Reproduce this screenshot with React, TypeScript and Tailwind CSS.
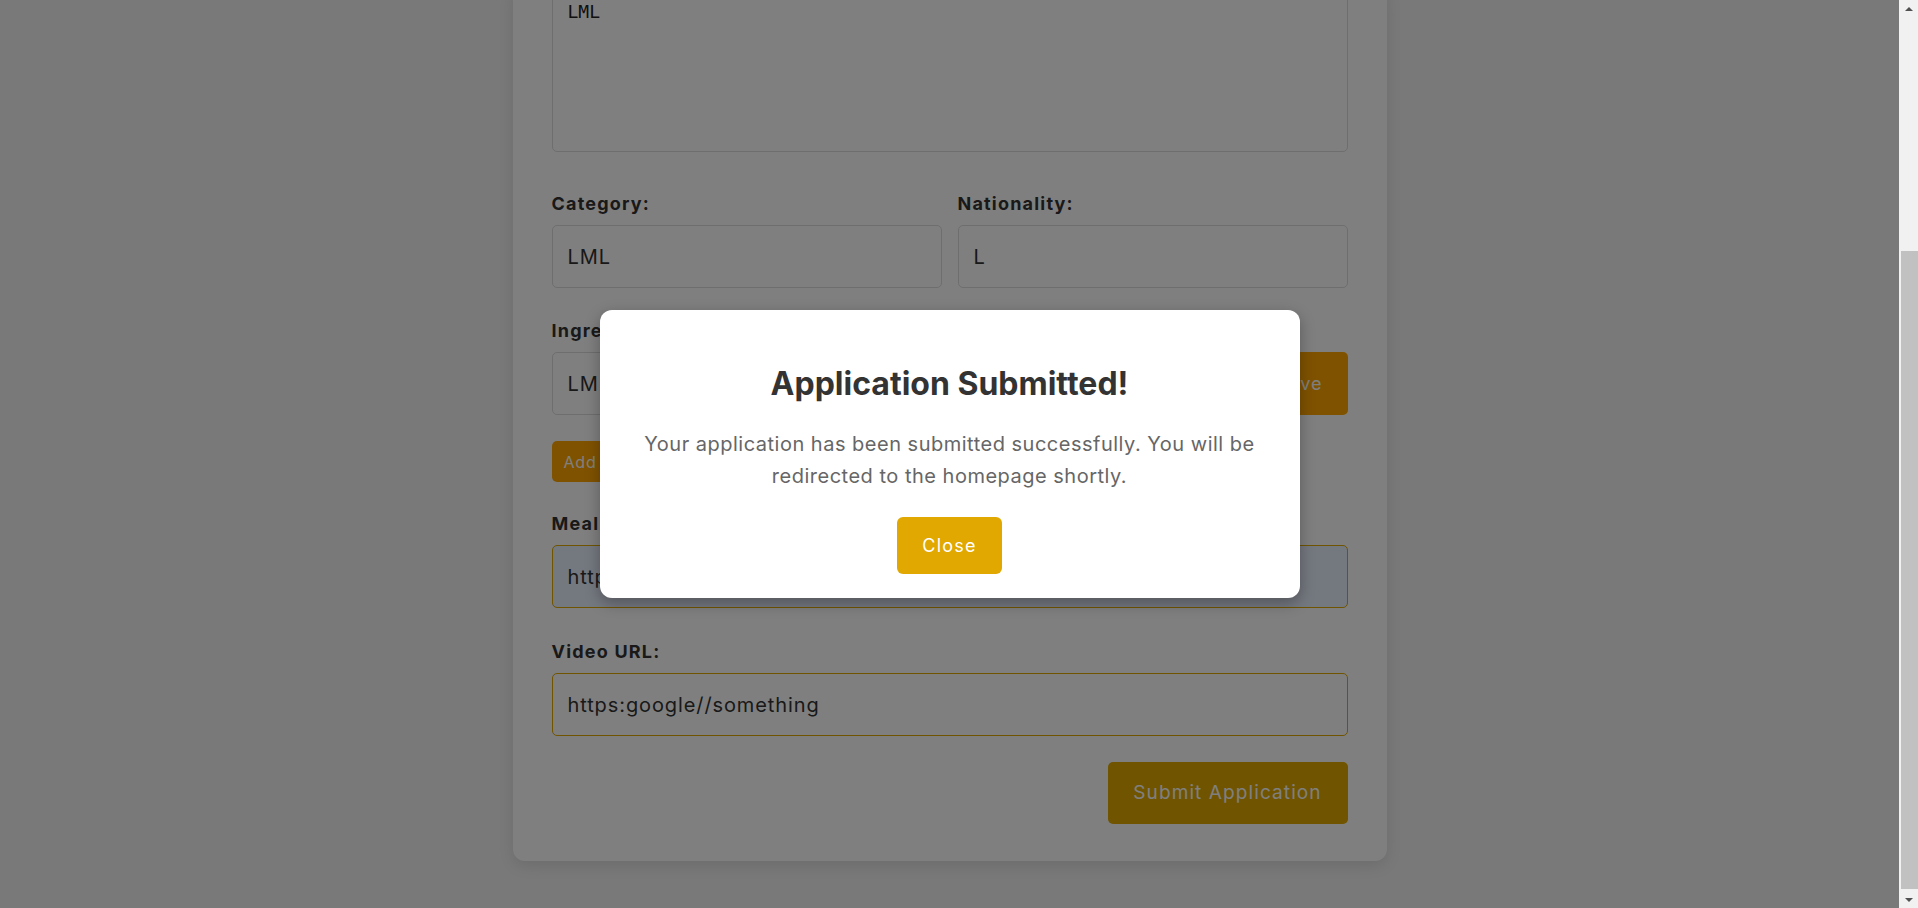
import type { ReactNode } from "react";

function Label({ children }: { children: ReactNode }) {
  return (
    <label className="block mb-[8px] text-[18px] leading-[27px] font-bold tracking-[1.2px] text-[#333]">
      {children}
    </label>
  );
}

const inputCls =
  "block w-full h-[63px] px-[15px] rounded-[5px] border border-[#ddd] bg-white text-[20px] tracking-[0.9px] text-[#333] outline-none";

function Scrollbar() {
  // classic browser scrollbar, page scrolled to the bottom
  return (
    <div className="flex h-full w-[19px] shrink-0 flex-col bg-[#f1f1f1]">
      <div className="flex h-[17px] items-center justify-center">
        <div className="h-0 w-0 border-x-[4px] border-b-[4px] border-x-transparent border-b-[#505050]" />
      </div>
      <div className="flex-1 pt-[234px] pl-[2px]">
        <div className="h-[638px] bg-[#c1c1c1]" />
      </div>
      <div className="flex h-[17px] items-center justify-center">
        <div className="h-0 w-0 border-x-[4px] border-t-[4px] border-x-transparent border-t-[#505050]" />
      </div>
    </div>
  );
}

export default function App() {
  return (
    <div className="flex h-screen overflow-hidden font-['Inter',sans-serif]">
      <main className="relative flex flex-1 flex-col justify-end overflow-hidden bg-[#f2f2f2]">
        <div className="shrink-0 pb-[47px]">
          <form className="mx-auto w-[874px] rounded-xl bg-white px-[39px] pb-[37px] shadow-[0_5px_15px_rgba(0,0,0,0.1)]">
            <textarea
              className="block w-full h-[167px] p-[15px] rounded-[5px] border border-[#ddd] bg-white font-['DejaVu_Sans_Mono',monospace] text-[18px] leading-[21px] text-[#222] outline-none resize-none"
              value="LML"
              readOnly
            />

            <div className="mt-[38px] grid grid-cols-2 gap-[16px]">
              <div>
                <Label>Category:</Label>
                <input className={inputCls} value="LML" readOnly />
              </div>
              <div>
                <Label>Nationality:</Label>
                <input className={inputCls} value="L" readOnly />
              </div>
            </div>

            <div className="mt-[29px]">
              <Label>Ingredients:</Label>
              <div className="flex gap-[10px]">
                <input className={inputCls} value="LM" readOnly />
                <button
                  type="button"
                  className="h-[63px] shrink-0 rounded-[5px] bg-[#ffa500] px-[25px] text-[18px] tracking-[1px] text-white"
                >
                  Remove
                </button>
              </div>
            </div>

            <button
              type="button"
              className="mt-[26px] block h-[41px] rounded-[5px] bg-[#ffa500] px-[12px] text-[16px] tracking-[0.8px] text-white"
            >
              Add Ingredient
            </button>

            <div className="mt-[28px]">
              <Label>Meal Image URL:</Label>
              <input
                className={inputCls + " !border-[#e0a800] !bg-[#e8f0fe]"}
                value="https://images.example.com/meal.jpg"
                readOnly
              />
            </div>

            <div className="mt-[30px]">
              <Label>Video URL:</Label>
              <input
                className={inputCls + " !border-[#e0a800]"}
                value="https:google//something"
                readOnly
              />
            </div>

            <div className="mt-[26px] flex justify-end">
              <button
                type="button"
                className="h-[62px] w-[240px] rounded-[5px] bg-[#e0a800] text-[19px] tracking-[1.1px] text-white"
              >
                Submit Application
              </button>
            </div>
          </form>
        </div>

        <div className="absolute inset-0 z-50 flex items-center justify-center bg-black/50">
          <div className="w-[700px] rounded-xl bg-white px-[30px] pt-[55px] pb-[24px] text-center shadow-[0_5px_15px_rgba(0,0,0,0.3)]">
            <h2 className="text-[32px] leading-[38px] font-bold text-[#333]">
              Application Submitted!
            </h2>
            <p className="mt-[25px] text-[20px] leading-[32px] tracking-[0.5px] text-[#666]">
              Your application has been submitted successfully. You will be redirected to the
              homepage shortly.
            </p>
            <button
              type="button"
              className="mt-[25px] h-[57px] w-[105px] rounded-[6px] bg-[#e0a800] text-[18px] tracking-[1.2px] text-white"
            >
              Close
            </button>
          </div>
        </div>
      </main>
      <Scrollbar />
    </div>
  );
}
